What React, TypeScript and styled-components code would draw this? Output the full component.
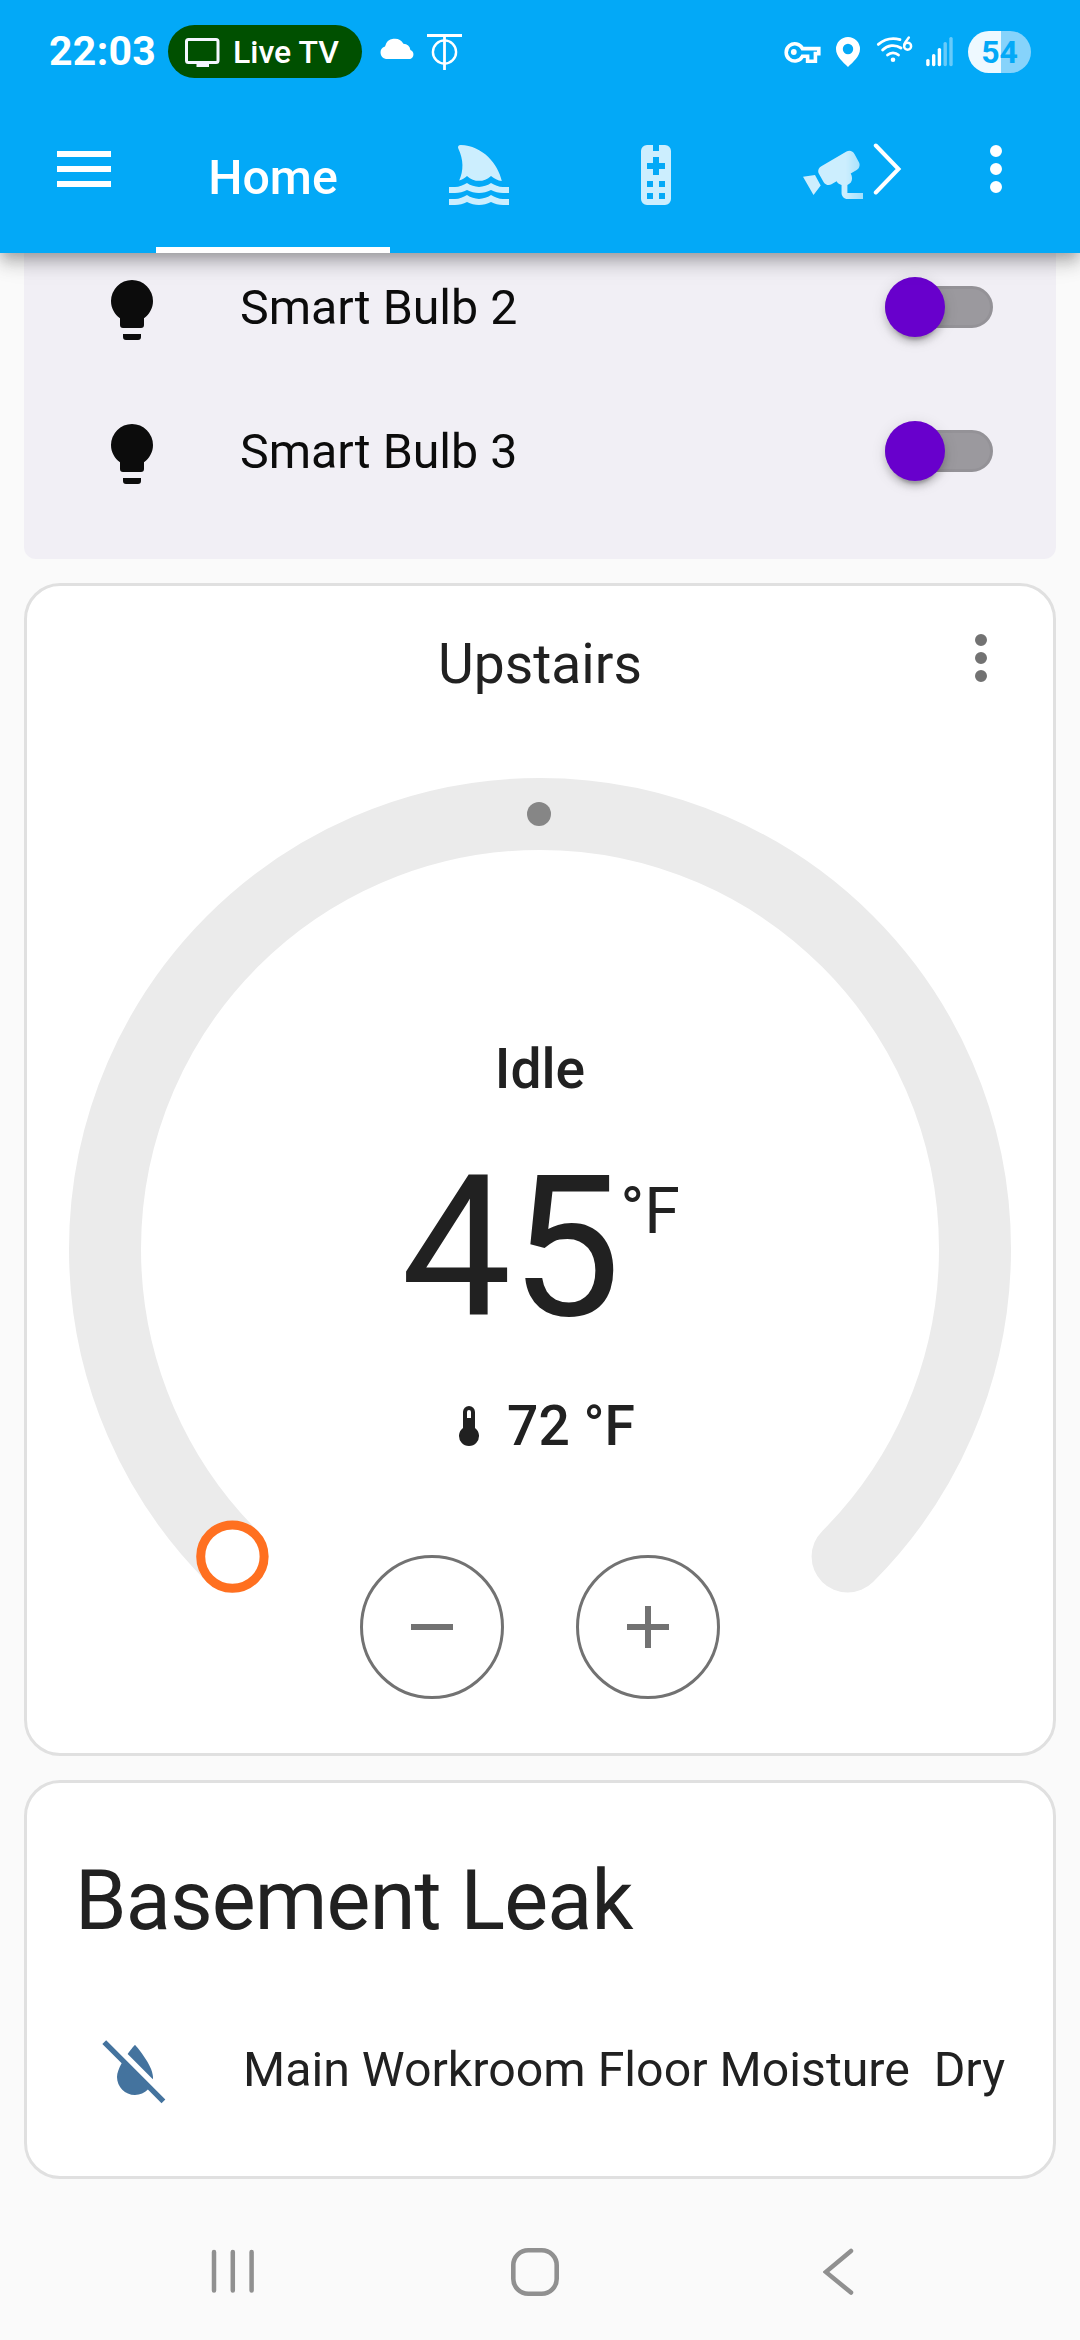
import React from "react";
import styled, { createGlobalStyle } from "styled-components";

const GlobalStyle = createGlobalStyle`
  * { box-sizing: border-box; }
  html, body { margin: 0; padding: 0; background: #fafafa; }
  body { font-family: Roboto, "Noto Sans", sans-serif; color: #212121; }
  svg { display: block; flex: none; }
`;

const Screen = styled.div`
  width: 1080px;
  height: 2340px;
  display: flex;
  flex-direction: column;
  overflow: hidden;
  background: #fafafa;
`;

/* ---------- top area ---------- */

const TopArea = styled.header`
  flex: none;
  position: relative;
  z-index: 2;
  height: 253px;
  background: #03a9f7;
  color: #fff;
  box-shadow: 0 6px 12px -3px rgba(0, 0, 0, 0.2), 0 12px 15px 0 rgba(0, 0, 0, 0.14),
    0 3px 30px 0 rgba(0, 0, 0, 0.12);
`;

const StatusBar = styled.div`
  height: 85px;
  padding: 25px 49px 7px 49px;
  display: flex;
  align-items: flex-start;
  justify-content: space-between;
`;

const StatusGroup = styled.div`
  display: flex;
  align-items: center;
  height: 53px;
`;

const Clock = styled.span`
  width: 119px;
  font-size: 41px;
  font-weight: 700;
  line-height: 53px;
  letter-spacing: 0.3px;
`;

const LivePill = styled.div`
  width: 194px;
  height: 53px;
  margin-right: 17px;
  padding-left: 17px;
  display: flex;
  align-items: center;
  gap: 13px;
  border-radius: 27px;
  background: #005000;
  font-size: 32px;
  font-weight: 500;
  white-space: nowrap;
`;

const BatteryPill = styled.div`
  width: 63px;
  height: 42px;
  border-radius: 21px;
  background: linear-gradient(90deg, #eef9ff 33px, #86d3fb 33px);
  color: #03a9f7;
  font-size: 32px;
  font-weight: 700;
  line-height: 42px;
  text-align: center;
`;

const Toolbar = styled.div`
  height: 168px;
  padding: 0 48px;
  display: flex;
  align-items: center;
`;

const Tabs = styled.nav`
  width: 714px;
  height: 168px;
  margin-left: 36px;
  display: flex;
  overflow: hidden;
  mask-image: linear-gradient(90deg, #000 690px, rgba(0, 0, 0, 0.7) 714px);
`;

const Tab = styled.div<{ $active?: boolean }>`
  flex: none;
  width: ${(p) => (p.$active ? 234 : 177)}px;
  height: 168px;
  padding-top: ${(p) => (p.$active ? 19 : 12)}px;
  display: flex;
  align-items: center;
  justify-content: center;
  font-size: 48.3px;
  font-weight: 500;
  line-height: 1;
  color: ${(p) => (p.$active ? "#fff" : "rgba(255,255,255,0.8)")};
  box-shadow: ${(p) => (p.$active ? "inset 0 -6px 0 #fff" : "none")};
`;

const ScrollArrow = styled.div`
  width: 90px;
  padding-left: 3px;
`;

/* ---------- cards ---------- */

const Content = styled.main`
  flex: 1;
  padding: 0 24px;
  display: flex;
  flex-direction: column;
  gap: 24px;
`;

const LightsCard = styled.section`
  height: 306px;
  border-radius: 0 0 12px 12px;
  background: #f1eff5;
  color: #0c0c0c;
`;

const LightRow = styled.div`
  height: 144px;
  padding: 0 63px 0 72px;
  display: flex;
  align-items: center;

  &:first-child {
    height: 126px;
    padding-bottom: 18px;
  }
`;

const RowIcon = styled.div`
  width: 144px;
  padding-top: 6px;
`;

const RowName = styled.span`
  flex: 1;
  padding-top: 1px;
  font-size: 48.3px;
  line-height: 56px;
  white-space: nowrap;
`;

const SwitchTrack = styled.div`
  width: 108px;
  height: 42px;
  display: flex;
  align-items: center;
  border-radius: 21px;
  border: 3px solid #949297;
  background: #9b999e;
`;

const SwitchKnob = styled.div`
  flex: none;
  width: 60px;
  height: 60px;
  margin-left: -3px;
  border-radius: 50%;
  background: #6800cc;
  box-shadow: 0 9px 3px -6px rgba(0, 0, 0, 0.2), 0 6px 6px 0 rgba(0, 0, 0, 0.14),
    0 3px 15px 0 rgba(0, 0, 0, 0.12);
`;

const Card = styled.section<{ $height: number }>`
  flex: none;
  height: ${(p) => p.$height}px;
  border: 3px solid #e0e0e0;
  border-radius: 36px;
  background: #fff;
`;

const ThermostatHeader = styled.div`
  height: 192px;
  padding: 36px;
  display: grid;
  grid-template-columns: 1fr auto 1fr;
  align-items: start;
  color: #727272;
`;

const ThermostatTitle = styled.h2`
  grid-column: 2;
  margin: 0;
  padding-top: 9px;
  font-size: 55.2px;
  font-weight: 400;
  line-height: 66px;
  color: #212121;
`;

const HeaderMenu = styled.div`
  justify-self: end;
`;

const Dial = styled.div`
  width: 942px;
  height: 942px;
  margin: 0 auto;
  display: grid;

  & > * {
    grid-area: 1 / 1;
  }
`;

const DialInfo = styled.div`
  padding-top: 258px;
  display: flex;
  flex-direction: column;
  align-items: center;
`;

const DialLabel = styled.div`
  height: 66px;
  display: flex;
  align-items: center;
  gap: 14px;
  font-size: 55.2px;
  font-weight: 500;
  line-height: 66px;
  white-space: pre;
`;

const Target = styled.div`
  height: 197px;
  margin: 48px 0 46px;
  padding-left: 1px;
  display: flex;
  font-size: 196.65px;
  line-height: 197px;
  letter-spacing: -1px;
`;

const TargetUnit = styled.span`
  padding-top: 29px;
  font-size: 64.5px;
  line-height: 64px;
  letter-spacing: 0;
`;

const Steps = styled.div`
  margin-top: 96px;
  display: flex;
  gap: 72px;
`;

const StepButton = styled.button`
  width: 144px;
  height: 144px;
  padding: 0;
  display: flex;
  align-items: center;
  justify-content: center;
  border: 3px solid #727272;
  border-radius: 50%;
  background: transparent;
  color: #727272;
`;

const LeakTitle = styled.h1`
  margin: 0;
  padding: 68px 48px 0;
  font-size: 82.8px;
  font-weight: 400;
  line-height: 100px;
  letter-spacing: -0.85px;
`;

const LeakRow = styled.div`
  margin-top: 58px;
  height: 120px;
  padding: 0 48px 0 72px;
  display: flex;
  align-items: center;
`;

const LeakIcon = styled(RowIcon)`
  width: 144px;
  padding-top: 4px;
  color: #44739e;
`;

const RowState = styled(RowName)`
  flex: none;
`;

/* ---------- system navigation ---------- */

const SystemNav = styled.footer`
  flex: none;
  height: 136px;
  padding: 0 222px 0 208px;
  display: flex;
  align-items: center;
`;

const NavButton = styled.div<{ $before?: number }>`
  margin-left: ${(p) => p.$before ?? 0}px;
`;

const MdiIcon = ({ d, size = 72 }: { d: string; size?: number }) => (
  <svg width={size} height={size} viewBox="0 0 24 24" fill="currentColor" fillRule="evenodd">
    <path d={d} />
  </svg>
);

const icons = {
  menu: "M3,6H21V8H3V6M3,11H21V13H3V11M3,16H21V18H3V16Z",
  dots: "M12,16A2,2 0 0,1 14,18A2,2 0 0,1 12,20A2,2 0 0,1 10,18A2,2 0 0,1 12,16M12,10A2,2 0 0,1 14,12A2,2 0 0,1 12,14A2,2 0 0,1 10,12A2,2 0 0,1 12,10M12,4A2,2 0 0,1 14,6A2,2 0 0,1 12,8A2,2 0 0,1 10,6A2,2 0 0,1 12,4Z",
  shark:
    "M5.9,2C5.2,2 4.8,2.6 5.1,3.2C6.9,7 6.9,10.6 5.4,13.8C6.4,13.6 7.2,13 8,12.3C10.4,14.5 13.6,14.5 16,12.3C17,13.2 18.3,13.8 19.6,14C18.4,8.3 13.2,2.2 5.9,2M22,16V18H20C18.6,18 17.2,17.6 16,17C13.5,18.3 10.5,18.3 8,17C6.8,17.6 5.4,18 4,18H2V16H4C5.4,16 6.8,15.5 8,14.7C10.4,16.4 13.6,16.4 16,14.7C17.2,15.5 18.6,16 20,16H22M20,20C18.6,20 17.2,19.5 16,18.7C13.6,20.4 10.4,20.4 8,18.7C6.8,19.5 5.4,20 4,20H2V22H4C5.4,22 6.8,21.6 8,21C10.5,22.3 13.5,22.3 16,21C17.2,21.6 18.6,22 20,22H22V20H20Z",
  remote:
    "M9,2H11V4H13V2H15A2,2 0 0,1 17,4V20A2,2 0 0,1 15,22H9A2,2 0 0,1 7,20V4A2,2 0 0,1 9,2M11,6V8H9V10H11V12H13V10H15V8H13V6H11M9,14V16H11V14H9M13,14V16H15V14H13M9,18V20H11V18H9M13,18V20H15V18H13Z",
  cctv: "M16.5,4.2L8.1,9.05C7.1,9.6 6.8,10.75 7.35,11.7L8.9,14.4C9.45,15.3 10.6,15.6 11.5,15.1L13.2,14.1C13.5,14.7 14,15.1 14.85,15.35V18C14.85,19.1 15.7,20 16.8,20H22V18H16.8V15.3C17.8,15 18.35,14.2 18.35,13.2C18.35,12.5 18.2,12 17.9,11.5L19.9,10.35C20.85,9.8 21.15,8.6 20.6,7.7L19.2,5.1C18.7,4 17.5,3.6 16.5,4.2M6,12L2,12.6L5.5,18.7L7.9,15.5L6,12Z",
  bulb: "M12,2A7,7 0 0,0 5,9C5,11.38 6.19,13.47 8,14.74V17A1,1 0 0,0 9,18H15A1,1 0 0,0 16,17V14.74C17.81,13.47 19,11.38 19,9A7,7 0 0,0 12,2M9,21A1,1 0 0,0 10,22H14A1,1 0 0,0 15,21V20H9V21Z",
  thermometer:
    "M15 13V5A3 3 0 0 0 9 5V13A5 5 0 1 0 15 13M12 4A1 1 0 0 1 13 5V8H11V5A1 1 0 0 1 12 4Z",
  minus: "M19,13H5V11H19V13Z",
  plus: "M19,13H13V19H11V13H5V11H11V5H13V11H19V13Z",
  waterOff:
    "M20.84 22.73L16.29 18.18C15.2 19.3 13.69 20 12 20C8.69 20 6 17.31 6 14C6 12.67 6.67 11.03 7.55 9.44L1.11 3L2.39 1.73L22.11 21.46L20.84 22.73M18 14C18 10 12 3.25 12 3.25S10.84 4.55 9.55 6.35L17.95 14.75C18 14.5 18 14.24 18 14Z",
};

const StatusLeftIcons = () => (
  <svg width="84" height="40" viewBox="379 34 84 40" fill="#fff">
    <path d="M386 61 a6.5 6.5 0 0 1 -1 -12.6 a10 10 0 0 1 18.4 -2.6 a7.4 7.4 0 0 1 7 6.2 a4.8 4.8 0 0 1 -0.2 9 Z" />
    <rect x="427" y="36" width="35" height="3" />
    <rect x="443.1" y="37" width="2.8" height="35" />
    <circle cx="444.5" cy="54" r="11.6" fill="none" stroke="#fff" strokeWidth="2.4" />
  </svg>
);

const StatusRightIcons = () => (
  <svg width="184" height="40" viewBox="784 32 184 40" fill="#fff">
    <g fill="none" stroke="#fff" strokeWidth="3.6">
      <path d="M802.5 48.6 H818.8 V53.6 H815.4 V61.2 H807.6 V56.2 H802.5 A8.6 8.6 0 1 1 802.5 48.6 Z" />
    </g>
    <circle cx="793.8" cy="52" r="2.9" />
    <path
      fillRule="evenodd"
      d="M848 37 a12 12 0 0 1 12 12 c0 7.5 -7 13 -12 18 c-5 -5 -12 -10.5 -12 -18 a12 12 0 0 1 12 -12 M848 43.8 a5.2 5.2 0 1 0 0 10.4 a5.2 5.2 0 1 0 0 -10.4 Z"
    />
    <g fill="none" stroke="#fff" strokeWidth="2.8" strokeLinecap="round">
      <path d="M878.3 44.4 A24 24 0 0 1 900 39.6" />
      <path d="M882.6 50 A14.5 14.5 0 0 1 901 48" />
      <path d="M887.5 55 A8 8 0 0 1 898.5 55" />
    </g>
    <g fill="none" stroke="#fff" strokeWidth="2.5" strokeLinecap="round">
      <circle cx="907.6" cy="46.2" r="3.5" />
      <path d="M904.4 44.4 C905 42 907 40 908.8 37.6" />
    </g>
    <circle cx="893" cy="59.8" r="2.3" />
    <rect x="926.2" y="59" width="3.4" height="7.2" rx="1.6" />
    <rect x="932" y="54" width="3.4" height="12.2" rx="1.6" />
    <rect x="937.7" y="48" width="3.4" height="18.2" rx="1.6" />
    <g opacity="0.4">
      <rect x="943.5" y="42" width="3.4" height="24.2" rx="1.6" />
      <rect x="949.3" y="37" width="3.4" height="29.2" rx="1.6" />
    </g>
  </svg>
);

const TvIcon = () => (
  <svg width="35" height="30" viewBox="0 0 35 30">
    <rect x="1.5" y="2.5" width="31.5" height="23" rx="2" fill="none" stroke="#f4f6ff" strokeWidth="3" />
    <rect x="11.5" y="26" width="12.5" height="4" fill="#f4f6ff" />
  </svg>
);

const arcEnd = 435 * Math.SQRT1_2;

const DialRing = () => (
  <svg width="942" height="942" viewBox="-471 -471 942 942" overflow="visible">
    <path
      d={`M${-arcEnd} ${arcEnd} A435 435 0 1 1 ${arcEnd} ${arcEnd}`}
      fill="none"
      stroke="#ebebeb"
      strokeWidth="72"
      strokeLinecap="round"
    />
    <circle cx="-1" cy="-435" r="12" fill="#868686" />
    <circle cx={-arcEnd} cy={arcEnd} r="31.7" fill="#fff" stroke="#ff7020" strokeWidth="9" />
  </svg>
);

const Switch = () => (
  <SwitchTrack>
    <SwitchKnob />
  </SwitchTrack>
);

export default function App() {
  return (
    <>
      <GlobalStyle />
      <Screen>
        <TopArea>
          <StatusBar>
            <StatusGroup>
              <Clock>22:03</Clock>
              <LivePill>
                <TvIcon />
                Live TV
              </LivePill>
              <StatusLeftIcons />
            </StatusGroup>
            <StatusGroup>
              <StatusRightIcons />
              <BatteryPill>54</BatteryPill>
            </StatusGroup>
          </StatusBar>
          <Toolbar>
            <MdiIcon d={icons.menu} />
            <Tabs>
              <Tab $active>Home</Tab>
              <Tab>
                <MdiIcon d={icons.shark} />
              </Tab>
              <Tab>
                <MdiIcon d={icons.remote} />
              </Tab>
              <Tab>
                <MdiIcon d={icons.cctv} />
              </Tab>
            </Tabs>
            <ScrollArrow>
              <svg width="30" height="54" viewBox="0 0 30 54">
                <path
                  d="M2.8 3.5 L25.5 27 L2.8 50.5"
                  fill="none"
                  stroke="#fff"
                  strokeWidth="4"
                  strokeLinecap="round"
                />
              </svg>
            </ScrollArrow>
            <MdiIcon d={icons.dots} />
          </Toolbar>
        </TopArea>

        <Content>
          <LightsCard>
            {["Smart Bulb 2", "Smart Bulb 3"].map((name) => (
              <LightRow key={name}>
                <RowIcon>
                  <MdiIcon d={icons.bulb} />
                </RowIcon>
                <RowName>{name}</RowName>
                <Switch />
              </LightRow>
            ))}
          </LightsCard>

          <Card $height={1173}>
            <ThermostatHeader>
              <ThermostatTitle>Upstairs</ThermostatTitle>
              <HeaderMenu>
                <MdiIcon d={icons.dots} />
              </HeaderMenu>
            </ThermostatHeader>
            <Dial>
              <DialRing />
              <DialInfo>
                <DialLabel>Idle</DialLabel>
                <Target>
                  45
                  <TargetUnit>°F</TargetUnit>
                </Target>
                <DialLabel>
                  <MdiIcon d={icons.thermometer} size={48} />
                  72 °F
                </DialLabel>
                <Steps>
                  <StepButton>
                    <MdiIcon d={icons.minus} />
                  </StepButton>
                  <StepButton>
                    <MdiIcon d={icons.plus} />
                  </StepButton>
                </Steps>
              </DialInfo>
            </Dial>
          </Card>

          <Card $height={399}>
            <LeakTitle>Basement Leak</LeakTitle>
            <LeakRow>
              <LeakIcon>
                <MdiIcon d={icons.waterOff} />
              </LeakIcon>
              <RowName>Main Workroom Floor Moisture</RowName>
              <RowState>Dry</RowState>
            </LeakRow>
          </Card>
        </Content>

        <SystemNav>
          <NavButton>
            <svg width="50" height="50" viewBox="0 0 50 50" stroke="#909090" strokeWidth="4.5" strokeLinecap="round">
              <path d="M6 5 V43.5 M24.8 5 V43.5 M43.6 5 V43.5" />
            </svg>
          </NavButton>
          <NavButton $before={252}>
            <svg width="50" height="50" viewBox="0 0 50 50" fill="none" stroke="#909090" strokeWidth="4.6">
              <rect x="3.3" y="3.3" width="43.4" height="43.4" rx="15" />
            </svg>
          </NavButton>
          <NavButton $before={263}>
            <svg
              width="34"
              height="50"
              viewBox="0 0 34 50"
              fill="none"
              stroke="#909090"
              strokeWidth="4.5"
              strokeLinecap="round"
            >
              <path d="M28 4 L2.8 25 L28 45.5" />
            </svg>
          </NavButton>
        </SystemNav>
      </Screen>
    </>
  );
}
